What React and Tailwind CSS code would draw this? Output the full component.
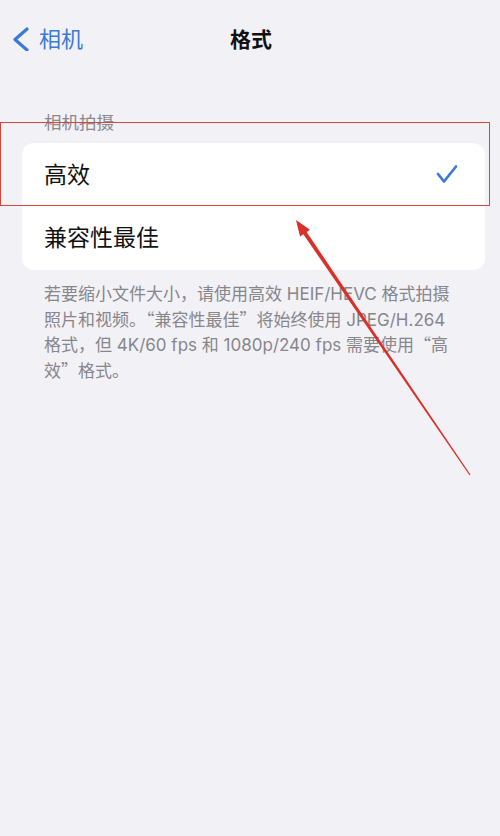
export default function App() {
  const font = { fontFamily: '"Inter", "Noto Sans CJK SC", "Noto Sans", sans-serif' };
  const cjk = { fontFamily: '"Noto Sans CJK SC", sans-serif' };
  return (
    <div className="relative min-h-[836px] w-full overflow-hidden bg-[#f2f1f6]" style={font}>
      {/* Nav bar */}
      <div className="mt-[17px] grid h-[44px] grid-cols-3 items-center">
        <div className="flex items-center pl-[12px] text-[#3a7ad8]">
          <svg width="18" height="24" viewBox="0 0 18 24" className="shrink-0">
            <polyline points="15,2 3,12.5 15,23" fill="none" stroke="currentColor" strokeWidth="3.2" strokeLinecap="round" strokeLinejoin="round" />
          </svg>
          <span className="ml-[9px] text-[22px] leading-none">相机</span>
        </div>
        <div className="ml-[2px] justify-self-center text-[21px] font-semibold leading-none text-[#111]">格式</div>
        <div />
      </div>

      {/* Section header */}
      <div className="mt-[52px] pl-[44px] text-[17.5px] leading-[20px] text-[#8a8a8e]">相机拍摄</div>

      {/* Card */}
      <div className="ml-[22px] mr-[15px] mt-[10px] overflow-hidden rounded-[12px] bg-white">
        <div className="flex h-[64px] items-center justify-between pl-[22px] pr-[27px]">
          <span className="text-[23px] leading-none text-[#111]">高效</span>
          <svg width="22" height="22" viewBox="0 0 22 22">
            <polyline points="2,10 8,17.5 20,2.5" fill="none" stroke="#3a7ad8" strokeWidth="2.7" strokeLinecap="round" strokeLinejoin="round" />
          </svg>
        </div>
        <div className="flex h-[63px] items-center pl-[22px]">
          <span className="text-[23px] leading-none text-[#111]">兼容性最佳</span>
        </div>
      </div>

      {/* Footer */}
      <div className="mt-[12px] pl-[44px] text-[17px] leading-[24.5px] text-[#86868b]">
        <div className="whitespace-nowrap">若要缩小文件大小，请使用高效 HEIF/HEVC 格式拍摄</div>
        <div className="whitespace-nowrap">
          照片和视频。<span style={cjk}>“</span>兼容性最佳<span style={cjk}>”</span>将始终使用 JPEG/H.264
        </div>
        <div className="whitespace-nowrap">
          格式，但 4K/60 fps 和 1080p/240 fps 需要使用<span style={cjk}>“</span>高
        </div>
        <div className="whitespace-nowrap">
          效<span style={cjk}>”</span>格式。
        </div>
      </div>

      {/* Annotation: red box */}
      <div className="pointer-events-none absolute left-0 top-[122px] h-[84px] w-[490px] border-[1.5px] border-[#d8453a]" />

      {/* Annotation: arrow */}
      <svg className="pointer-events-none absolute left-0 top-0" width="500" height="836" viewBox="0 0 500 836">
        <polygon
          points="296,220 310,229.8 306.65,232.1 470.5,474.66 469.5,475.34 303.35,234.3 300,236.6"
          fill="#d9302a"
        />
      </svg>
    </div>
  );
}
